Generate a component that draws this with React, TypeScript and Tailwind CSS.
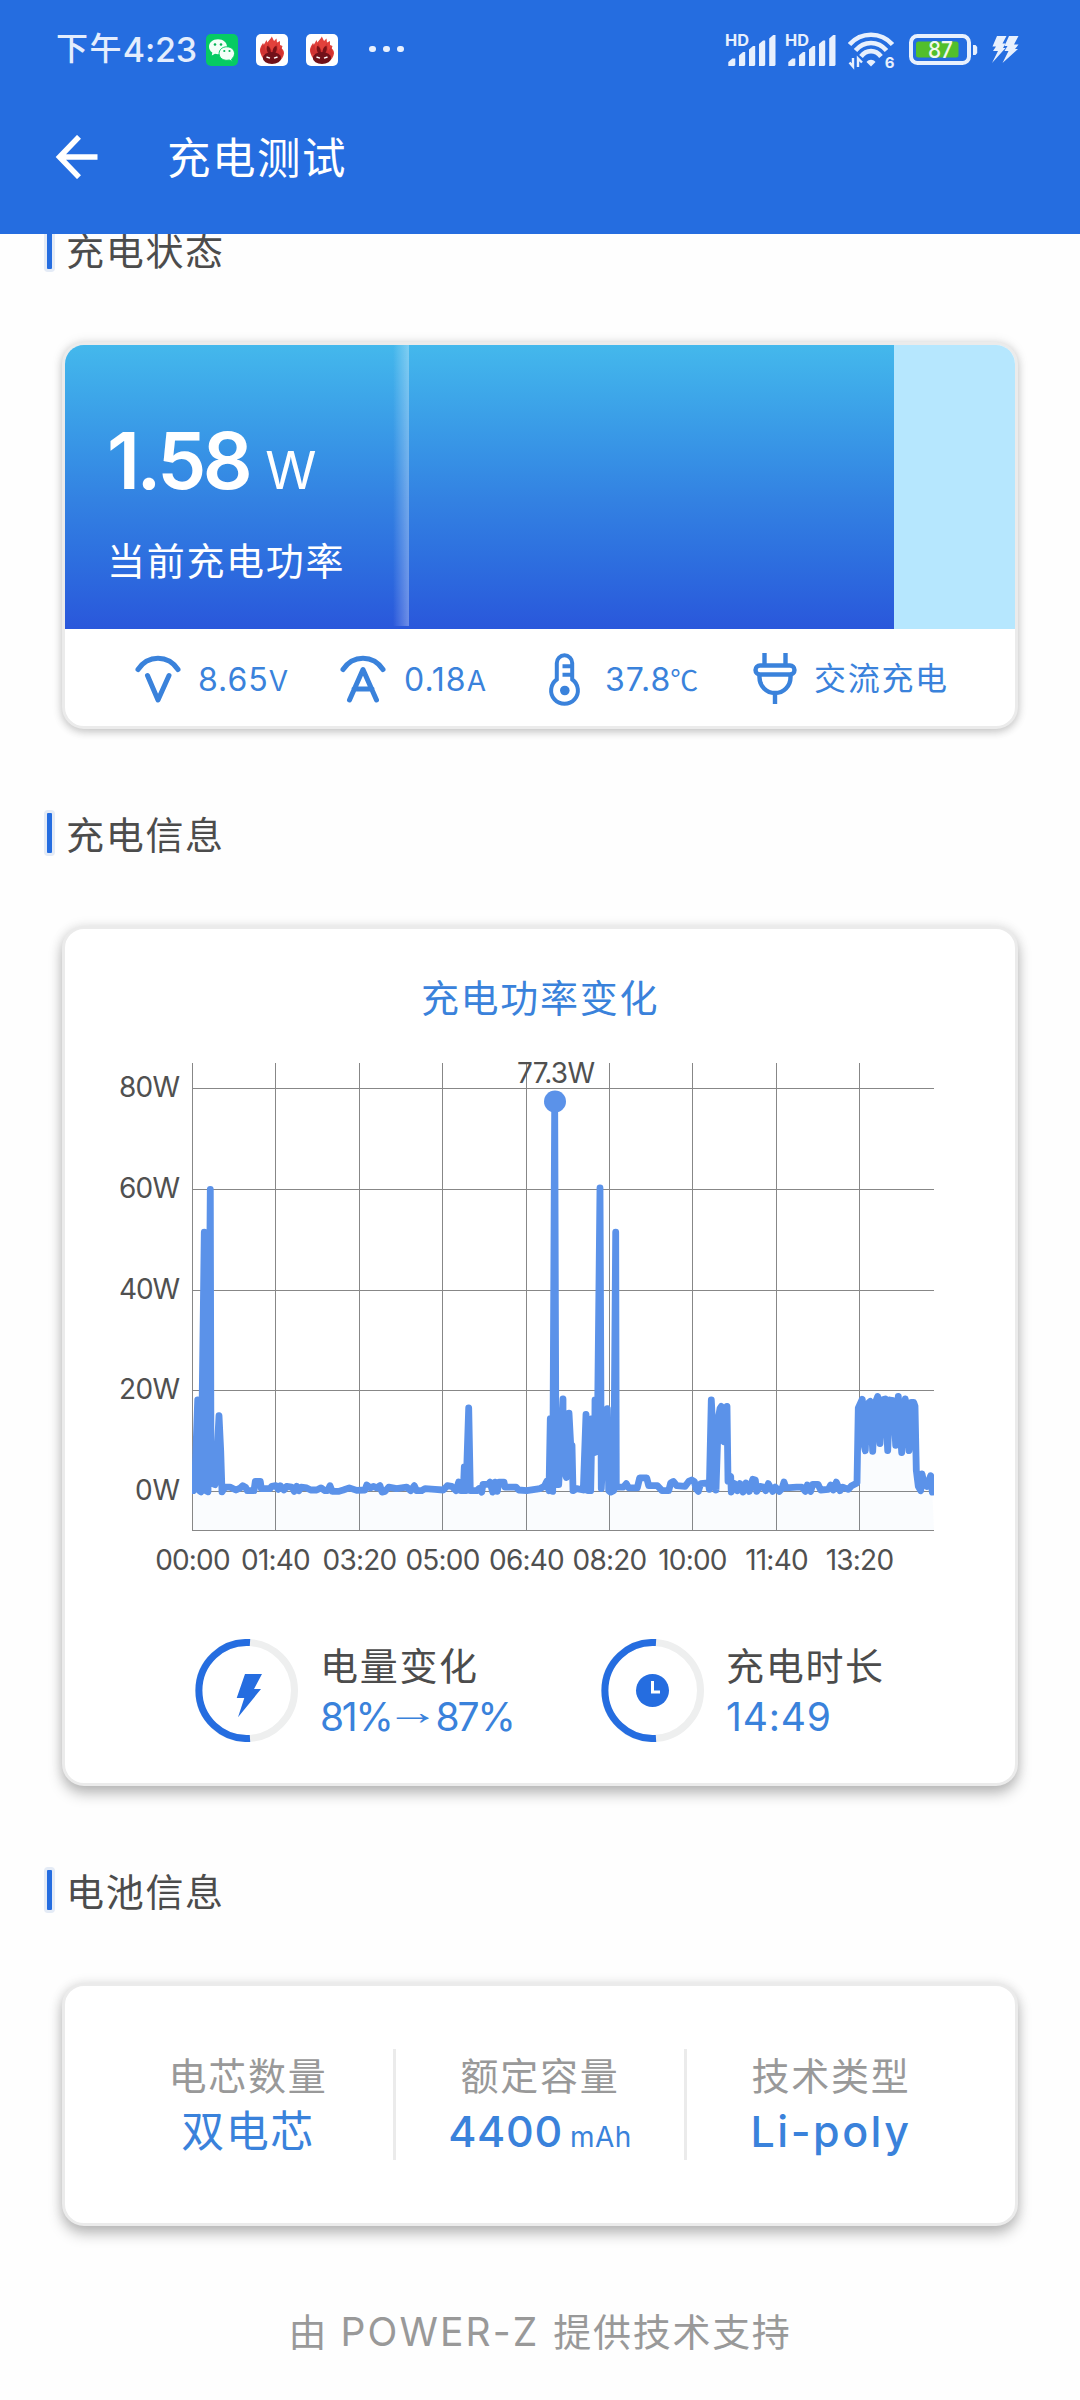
import type { ReactNode } from "react";

const SANS = "font-['Inter','Noto_Sans_CJK_SC',sans-serif]";

/* Power samples as flat x,y pairs on a 1/3 px by 1/2.8 px lattice. */
const SAMPLES: number[] = [
  280, 1262, 286, 1200, 293, 1008, 298, 1262, 303, 1265, 313, 538, 318, 1262, 324, 1265, 331, 418, 333, 1240, 345, 1245,
  350, 1180, 357, 1052, 362, 1150, 366, 1265, 375, 1252, 390, 1252, 408, 1260, 420, 1255, 428, 1248, 437, 1253, 442,
  1262, 462, 1262, 466, 1236, 481, 1236, 484, 1256, 510, 1256, 515, 1250, 527, 1248, 535, 1258, 541, 1248, 552, 1260,
  560, 1250, 575, 1252, 583, 1264, 590, 1250, 597, 1262, 603, 1252, 620, 1254, 632, 1260, 650, 1260, 663, 1254, 675,
  1262, 683, 1262, 690, 1248, 697, 1264, 715, 1264, 730, 1260, 748, 1254, 770, 1261, 795, 1260, 800, 1246, 812, 1254,
  820, 1250, 830, 1254, 840, 1248, 846, 1266, 855, 1264, 866, 1252, 890, 1256, 920, 1252, 932, 1262, 943, 1248, 950,
  1262, 965, 1262, 975, 1256, 1005, 1258, 1030, 1260, 1042, 1248, 1055, 1250, 1068, 1262, 1076, 1238, 1082, 1262, 1090,
  1262, 1093, 1195, 1098, 1262, 1106, 1030, 1111, 1262, 1130, 1262, 1137, 1256, 1145, 1266, 1149, 1244, 1165, 1244,
  1170, 1238, 1178, 1266, 1185, 1238, 1192, 1264, 1197, 1238, 1212, 1238, 1215, 1252, 1248, 1252, 1256, 1260, 1280,
  1262, 1320, 1256, 1333, 1250, 1340, 1236, 1347, 1262, 1351, 1060, 1358, 1264, 1364, 175, 1368, 1245, 1376, 1245, 1389,
  1005, 1389, 1190, 1399, 1225, 1407, 1045, 1413, 1150, 1416, 1135, 1419, 1262, 1430, 1256, 1450, 1260, 1458, 1048,
  1464, 1262, 1472, 1262, 1476, 1060, 1484, 1155, 1485, 1008, 1492, 1130, 1500, 414, 1504, 1256, 1512, 1100, 1522, 1032,
  1526, 1262, 1532, 1266, 1541, 1262, 1547, 538, 1549, 1252, 1570, 1252, 1579, 1242, 1586, 1254, 1612, 1254, 1619, 1226,
  1640, 1226, 1646, 1248, 1672, 1248, 1686, 1262, 1706, 1262, 1712, 1240, 1720, 1236, 1730, 1248, 1755, 1250, 1766,
  1236, 1775, 1232, 1783, 1236, 1788, 1256, 1795, 1264, 1802, 1242, 1825, 1240, 1828, 1258, 1834, 1008, 1848, 1260,
  1855, 1060, 1860, 1032, 1864, 1026, 1872, 1125, 1881, 1026, 1884, 1235, 1892, 1222, 1894, 1266, 1904, 1242, 1912,
  1262, 1920, 1242, 1929, 1266, 1938, 1240, 1948, 1264, 1958, 1230, 1966, 1232, 1970, 1264, 1980, 1250, 1990, 1252,
  1997, 1262, 2005, 1242, 2018, 1264, 2026, 1252, 2038, 1264, 2046, 1256, 2052, 1238, 2058, 1254, 2090, 1252, 2105,
  1252, 2116, 1264, 2122, 1246, 2132, 1264, 2138, 1244, 2154, 1244, 2162, 1260, 2185, 1258, 2192, 1246, 2200, 1260,
  2209, 1238, 2220, 1262, 2228, 1252, 2245, 1258, 2255, 1248, 2271, 1240, 2275, 1030, 2287, 1006, 2289, 1120, 2296,
  1150, 2301, 1020, 2311, 1012, 2318, 1152, 2324, 1020, 2333, 998, 2340, 1130, 2346, 1008, 2356, 1005, 2363, 1150, 2369,
  1008, 2380, 1010, 2387, 1135, 2395, 998, 2405, 1155, 2411, 1030, 2416, 1005, 2427, 1150, 2434, 1015, 2441, 1015, 2445,
  1025, 2449, 1205, 2455, 1250, 2462, 1262, 2466, 1215, 2473, 1245, 2480, 1250, 2492, 1220, 2497, 1266,
];

const POINTS = SAMPLES.map((v, i) => (i % 2 === 0 ? 100 + v / 3 : 1040 + v / 2.8).toFixed(1)).join(" ");

const TIMES: [string, number][] = [
  ["00:00", 192.5],
  ["01:40", 275.5],
  ["03:20", 359.5],
  ["05:00", 442.5],
  ["06:40", 526.5],
  ["08:20", 609.5],
  ["10:00", 692.5],
  ["11:40", 776.5],
  ["13:20", 859.5],
];

const WATTS: [string, number][] = [
  ["80W", 1088.5],
  ["60W", 1189.5],
  ["40W", 1290.5],
  ["20W", 1390.5],
  ["0W", 1491.5],
];

function PowerChart() {
  return (
    <svg className={`block h-[540px] w-[850px] ${SANS}`} viewBox="100 1050 850 540">
      <g stroke="#878787" strokeWidth="1">
        {TIMES.map(([t, x]) => (
          <line key={t} x1={x} x2={x} y1="1063" y2="1531" />
        ))}
        {WATTS.map(([w, y]) => (
          <line key={w} x1="192" x2="934" y1={y} y2={y} />
        ))}
        <line x1="192" x2="934" y1="1530.5" y2="1530.5" />
      </g>
      <clipPath id="plot">
        <rect x="192" y="1060" width="742" height="471" />
      </clipPath>
      <g clipPath="url(#plot)">
        <polygon points={`193 1530 ${POINTS} 934 1530`} fill="#5b92e9" fillOpacity=".03" />
        <polyline
          points={POINTS}
          fill="none"
          stroke="#5b92e9"
          strokeWidth="6.8"
          strokeLinecap="round"
          strokeLinejoin="round"
        />
      </g>
      <circle cx="555" cy="1101.5" r="11" fill="#5b92e9" />
      <g fill="#505050" fontSize="28">
        {WATTS.map(([w, y], i) => (
          <text key={w} x="180" y={y + 8.3} textAnchor="end" textLength={i === 4 ? 45 : 61}>
            {w}
          </text>
        ))}
        {TIMES.map(([t, x]) => (
          <text key={t} x={x} y="1569.500" textAnchor="middle" letterSpacing="-0.8">
            {t}
          </text>
        ))}
        <text x="556" y="1083" textAnchor="middle" textLength="78">
          77.3W
        </text>
      </g>
    </svg>
  );
}

function WeChatIcon() {
  return (
    <svg className="size-8" viewBox="0 0 32 32">
      <rect width="32" height="32" rx="5" fill="#06cb63" />
      <path d="M12 5.200c-5.300 0-9 3.400-9 7.500 0 2.500 1.300 4.500 3.300 5.800l-.5 3 3.200-1.700c1 .3 2 .4 3 .4 5.300 0 9-3.400 9-7.500s-3.700-7.500-9-7.500z" fill="#f4fff8" />
      <path d="M20.800 12.800c-4.500 0-7.700 2.900-7.700 6.700s3.200 6.800 7.700 6.800c.9 0 1.700-.1 2.500-.3l2.900 1.500-.6-2.500c1.800-1.300 2.900-3.300 2.900-5.500 0-3.800-3.200-6.700-7.700-6.700z" fill="#f4fff8" stroke="#06cb63" strokeWidth="1" />
      <g fill="#06b457">
        <circle cx="9" cy="10.500" r="1.300" />
        <circle cx="15" cy="10.500" r="1.300" />
        <circle cx="18.300" cy="17" r="1.100" />
        <circle cx="23.500" cy="17" r="1.100" />
      </g>
    </svg>
  );
}

function FlameIcon() {
  return (
    <svg className="size-8" viewBox="0 0 32 32">
      <rect width="32" height="32" rx="5" fill="#fff" />
      <path d="M4.500 19c-1.500-4 .5-7 2.500-10l.5 2.500L10.500 6l.8 2.500L15 4l.8-1.500L18 7l2.500-2.500.5 4 3-1.500v4l2.500 1-.8 2.500c2.300 1.500 3 4.500 1.800 7-1.500 4.500-5 7.500-11 7.500S5.500 24 4.500 19z" fill="#e2413c" />
      <path d="M5 20c-1-5 1-8 3-11l2 9 2-9 4 8 5-8 1 8 3-4c2 3 2.500 7 1 10z" fill="#c62b2c" opacity=".65" />
      <path d="M11 12c2.500 0 3.800 3 4 7h-2.500c-1.500-1-2.300-4-1.500-7zm9.500 0c-2.500 0-3.800 3-4 7H19c1.500-1 2.300-4 1.500-7z" fill="#7a1218" />
      <ellipse cx="16" cy="24" rx="9.200" ry="6" fill="#711119" />
      <path d="M10.500 23l3.500 1.200M21.500 23l-3.500 1.200" stroke="#fff" strokeWidth="1.400" />
    </svg>
  );
}

function SignalBars() {
  return (
    <svg className="h-10 w-[54px]" viewBox="-4 -2 54 40">
      <text x="-1" y="14" fontSize="16" fontWeight="700" textLength="24" lengthAdjust="spacingAndGlyphs" fill="#e8f0fd">
        HD
      </text>
      <g fill="#e8f0fd">
        <path d="M2.300 34v-4l4-3.500h3V33l-1 1z" />
        <path d="M13 34V23.500l4-3.500h2.200V33l-1 1z" />
        <path d="M23 34V17.500l4-3.500h2.200V33l-1 1z" />
        <path d="M33 34V12l4-3.500h2.200V33l-1 1z" />
        <path d="M43.200 34V6.500l4-3.500h2.300v30l-1 1z" />
      </g>
    </svg>
  );
}

function WifiIcon() {
  return (
    <svg className="h-10 w-[50px]" viewBox="0 -2 50 40">
      <g fill="none" stroke="#e8f0fd" strokeWidth="4.600">
        <path d="M1.500 12.500C13 -.5 33 -.5 44.500 12.500" />
        <path d="M7.500 18.500C16 8.500 30 8.500 38.500 18.500" />
        <path d="M13 24.500C18.500 17.300 27.500 17.300 33 24.500" />
      </g>
      <path d="M18.500 30c2.500-3 6.500-3 9 0L23 34.500z" fill="#e8f0fd" />
      <path d="M1.500 30.500l3.500 4V26M10 35v-8.500l4 4" fill="none" stroke="#e8f0fd" strokeWidth="2.400" />
      <text x="36.800" y="35.500" fontSize="15" fontWeight="700" fill="#e8f0fd">
        6
      </text>
    </svg>
  );
}

function BatteryIcon() {
  return (
    <svg className="h-9 w-[70px]" viewBox="0 0 70 36">
      <rect x="2" y="4" width="58" height="27" rx="6.500" fill="none" stroke="#e8f0fd" strokeWidth="4" />
      <rect x="7" y="9.500" width="42.500" height="16" rx="2.500" fill="#52bf2b" />
      <path d="M64 13h2.500l1.700 2v6l-1.700 2H64z" fill="#e8f0fd" />
      <text x="31.500" y="26" textAnchor="middle" fontSize="23" fontWeight="500" textLength="25" lengthAdjust="spacingAndGlyphs" fill="#f2f8ef">
        87
      </text>
    </svg>
  );
}

function FlashIcon() {
  return (
    <svg className="h-9 w-7" viewBox="0 0 28 36" fill="#e8f0fd">
      <path d="M6 4h9.500l-4 7.500h3L12 16h2.500L1 31l6-12H2l3-4.500H1.500z" />
      <path d="M18 4h9.500L23 12.500h4.500L24 17h3L11.500 31l6-12h-4l3-5h-3z" />
    </svg>
  );
}

function Header() {
  return (
    <header className="relative z-10 flex h-[234px] flex-col bg-[#256de0]">
      <div className="flex h-[98px] items-center pl-[56px] pr-[61px] text-[#e4edfd]">
        <span className="flex w-[150px] items-center whitespace-nowrap leading-[36px] font-medium">
          <span className="text-[32px] tracking-[1.400px]">下午</span>
          <span className="mt-[1px] text-[34px] tracking-[-0.200px]">4:23</span>
        </span>
        <div className="mt-[1px] flex gap-[18px]">
          <WeChatIcon />
          <FlameIcon />
          <FlameIcon />
        </div>
        <div className="ml-[31px] flex gap-[7.500px]">
          <i className="size-[6.500px] rounded-full bg-[#e8f0fd]" />
          <i className="size-[6.500px] rounded-full bg-[#e8f0fd]" />
          <i className="size-[6.500px] rounded-full bg-[#e8f0fd]" />
        </div>
        <div className="ml-auto mt-[1px] flex items-center">
          <SignalBars />
          <div className="w-1.5" />
          <SignalBars />
          <div className="w-3" />
          <WifiIcon />
          <div className="w-[11px]" />
          <BatteryIcon />
          <div className="w-[12px]" />
          <FlashIcon />
        </div>
      </div>
      <div className="flex h-[118px] items-center pl-[55px]">
        <svg className="h-11 w-[44px]" viewBox="0 0 43 44" fill="none" stroke="#fff" strokeWidth="5.500">
          <path d="M42 22H5M23.500 1.800L4 22l19.500 20.200" />
        </svg>
        <h1 className="ml-[68px] mt-[3px] text-[43.500px] leading-none tracking-[1.500px] text-white">充电测试</h1>
      </div>
    </header>
  );
}

function SectionTitle({ children }: { children: ReactNode }) {
  return (
    <div className="flex h-[46px] items-center pl-[44px]">
      <i className="h-[46px] w-[11px] rounded-[4px] border-[3px] border-[#e4ebf6] bg-[#256de0]" />
      <h2 className="ml-[11px] mt-[3px] text-[38px] leading-none tracking-[1.700px] text-[#4c4c4c]">{children}</h2>
    </div>
  );
}

function Reading({ icon, value, unit }: { icon: ReactNode; value: string; unit: ReactNode }) {
  return (
    <div className="flex items-center">
      {icon}
      <span className="mt-[4px] flex items-baseline leading-none">
        <span className="text-[32px] tracking-[1px]">{value}</span>
        <span className="text-[28px]">{unit}</span>
      </span>
    </div>
  );
}

function StatusCard() {
  return (
    <section className="mx-[62px] h-[387px] overflow-hidden rounded-[22px] border-[3px] border-[#ebebeb] bg-white shadow-[0_3px_8px_rgba(0,0,0,0.18),0_0_12px_rgba(0,0,0,0.1)]">
      <div className="flex h-[284px] bg-[#b6e7fe]">
        <div className="relative h-full w-[829px] bg-linear-to-b from-[#44b8ec] via-[#3381e2] via-55% to-[#2a57db]">
          <div className="flex h-full flex-col pl-[42px] text-white">
            <div className="mt-[76px] flex items-baseline leading-[80px]">
              <span className="text-[78px] font-semibold tracking-[-3.500px]">1.58</span>
              <span className="ml-[16px] text-[52px]">W</span>
            </div>
            <p className="mt-[31px] text-[38px] leading-none tracking-[1.700px]">当前充电功率</p>
          </div>
          <div className="absolute left-[328px] top-0 h-[281px] w-4 border-r border-white/30 bg-linear-to-r from-white/0 to-white/30" />
        </div>
      </div>
      <div className="grid h-[97px] grid-cols-[205px_207px_205px_1fr] items-center pl-[70px] text-[#3a82db]">
        <Reading
          value="8.65"
          unit="V"
          icon={
            <svg className="mr-[17px] h-[52px] w-[46px]" viewBox="0 0 46 52" fill="none" stroke="currentColor" strokeWidth="5" strokeLinecap="round" strokeLinejoin="round">
              <path d="M3 17.500C13 2.500 33 2.500 43 17.500M12.500 23.500L23 48l11-24.500" />
            </svg>
          }
        />
        <Reading
          value="0.18"
          unit="A"
          icon={
            <svg className="mr-[18px] h-[52px] w-[46px]" viewBox="0 0 46 52" fill="none" stroke="currentColor" strokeWidth="5" strokeLinecap="round" strokeLinejoin="round">
              <path d="M3 17.500C13 2.500 33 2.500 43 17.500M9.500 48L23 17.500 36.500 48M14 37h18" />
            </svg>
          }
        />
        <Reading
          value="37.8"
          unit={<span className="-ml-[1px] font-['Noto_Sans_CJK_SC',sans-serif]">℃</span>}
          icon={
            <svg className="mr-[22px] mt-[4px] h-[54px] w-9" viewBox="0 0 36 54" fill="none" stroke="currentColor" strokeWidth="4">
              <path d="M9.800 26.500V10a7.700 7.700 0 0 1 15.400 0v16.500a13.400 13.400 0 1 1-15.400 0zM15.500 13.200h9.700M15.500 21.800h9.700" />
              <circle cx="17.800" cy="37.500" r="4.800" fill="currentColor" stroke="none" />
            </svg>
          }
        />
        <div className="flex items-center">
          <svg className="ml-[1px] mr-[17px] mt-[3px] h-[54px] w-11" viewBox="0 0 44 54" fill="none" stroke="currentColor" strokeWidth="4.400">
            <path d="M11.500 1v12M32.500 1v12M6.500 22.500v3a15.500 15.500 0 0 0 31 0v-3M22 41v11" />
            <rect x="2.500" y="13.500" width="39" height="9" rx="4.500" />
          </svg>
          <span className="mt-[2px] text-[32px] leading-none tracking-[1.700px]">交流充电</span>
        </div>
      </div>
    </section>
  );
}

function Ring({ children }: { children: ReactNode }) {
  return (
    <svg className="size-[103px]" viewBox="0 0 103 103">
      <circle cx="51.500" cy="51.500" r="48" fill="none" stroke="#eeefef" strokeWidth="7" />
      <path d="M55 3.600A48 48 0 1 0 55 99.400" fill="none" stroke="#256de0" strokeWidth="7" />
      {children}
    </svg>
  );
}

function ChargeCard() {
  return (
    <section className="mx-[62px] flex h-[860px] flex-col rounded-[22px] border-[3px] border-[#ebebeb] bg-white shadow-[0_8px_14px_rgba(0,0,0,0.25),0_0_12px_rgba(0,0,0,0.1)]">
      <h3 className="mt-[50px] text-center text-[38px] leading-none tracking-[1.700px] text-[#3a82db]">充电功率变化</h3>
      <div className="ml-[35px] mt-[33px]">
        <PowerChart />
      </div>
      <div className="mt-[49px] flex pl-[130px]">
        <div className="flex w-[406px] items-start">
          <Ring>
            <path d="M50 35h17l-8 15h7L43 78.300 49.300 59h-7.600z" fill="#256de0" />
          </Ring>
          <div className="ml-[22px] mt-[8px] flex flex-col whitespace-nowrap leading-none">
            <span className="text-[38px] tracking-[1.700px] text-[#4c4c4c]">电量变化</span>
            <span className="mt-[12px] flex h-[39px] items-center text-[39px] text-[#3a82db]">
              <span className="tracking-[-2.300px]">81%</span>
              <span className="-mt-[10px] flex h-[36px] w-[44px] scale-x-150 justify-center font-['Liberation_Serif',serif] text-[36px]">→</span>
              <span className="tracking-[-2px]">87%</span>
            </span>
          </div>
        </div>
        <div className="flex items-start">
          <Ring>
            <circle cx="51.500" cy="51.500" r="16.500" fill="#256de0" />
            <path d="M51.500 42v11H59" fill="none" stroke="#fff" strokeWidth="3" />
          </Ring>
          <div className="ml-[22px] mt-[8px] flex flex-col leading-none">
            <span className="text-[38px] tracking-[1.700px] text-[#4c4c4c]">充电时长</span>
            <span className="mt-[12px] text-[39px] tracking-[0.800px] text-[#3a82db]">14:49</span>
          </div>
        </div>
      </div>
    </section>
  );
}

function Spec({ label, children }: { label: string; children: ReactNode }) {
  return (
    <div className="flex flex-col items-center pt-[8px] leading-none">
      <span className="text-[38px] tracking-[1.700px] text-[#999]">{label}</span>
      <span className="mt-[15px] flex items-baseline whitespace-nowrap text-[43px] text-[#3a82db]">{children}</span>
    </div>
  );
}

function BatteryCard() {
  return (
    <section className="mx-[62px] h-[243px] rounded-[22px] border-[3px] border-[#ebebeb] bg-white px-[38px] pt-[63px] shadow-[0_8px_14px_rgba(0,0,0,0.25),0_0_12px_rgba(0,0,0,0.1)]">
      <div className="grid h-[111px] grid-cols-[290px_3px_288px_3px_288px]">
        <Spec label="电芯数量">
          <span className="tracking-[1.500px]">双电芯</span>
        </Spec>
        <i className="bg-[#ebebeb]" />
        <Spec label="额定容量">
          <span className="font-medium tracking-[0.700px]">4400</span>
          <span className="ml-[7px] text-[28px] tracking-[0.500px]">mAh</span>
        </Spec>
        <i className="bg-[#ebebeb]" />
        <Spec label="技术类型">
          <span className="font-medium tracking-[2.500px]">Li-poly</span>
        </Spec>
      </div>
    </section>
  );
}

export default function App() {
  return (
    <div className={`h-[2400px] w-[1080px] overflow-hidden bg-[#fefefe] ${SANS}`}>
      <Header />
      <main className="-mt-2">
        <SectionTitle>充电状态</SectionTitle>
        <div className="h-[70px]" />
        <StatusCard />
        <div className="h-[81px]" />
        <SectionTitle>充电信息</SectionTitle>
        <div className="h-[70px]" />
        <ChargeCard />
        <div className="h-[81px]" />
        <SectionTitle>电池信息</SectionTitle>
        <div className="h-[70px]" />
        <BatteryCard />
      </main>
      <footer className="mt-[86px] flex items-baseline justify-center gap-[14px] leading-[40px] text-[#999]">
        <span className="text-[38px]">由</span>
        <span className="text-[39px] tracking-[2.100px]">POWER-Z</span>
        <span className="text-[38px] tracking-[1.700px]">提供技术支持</span>
      </footer>
    </div>
  );
}
